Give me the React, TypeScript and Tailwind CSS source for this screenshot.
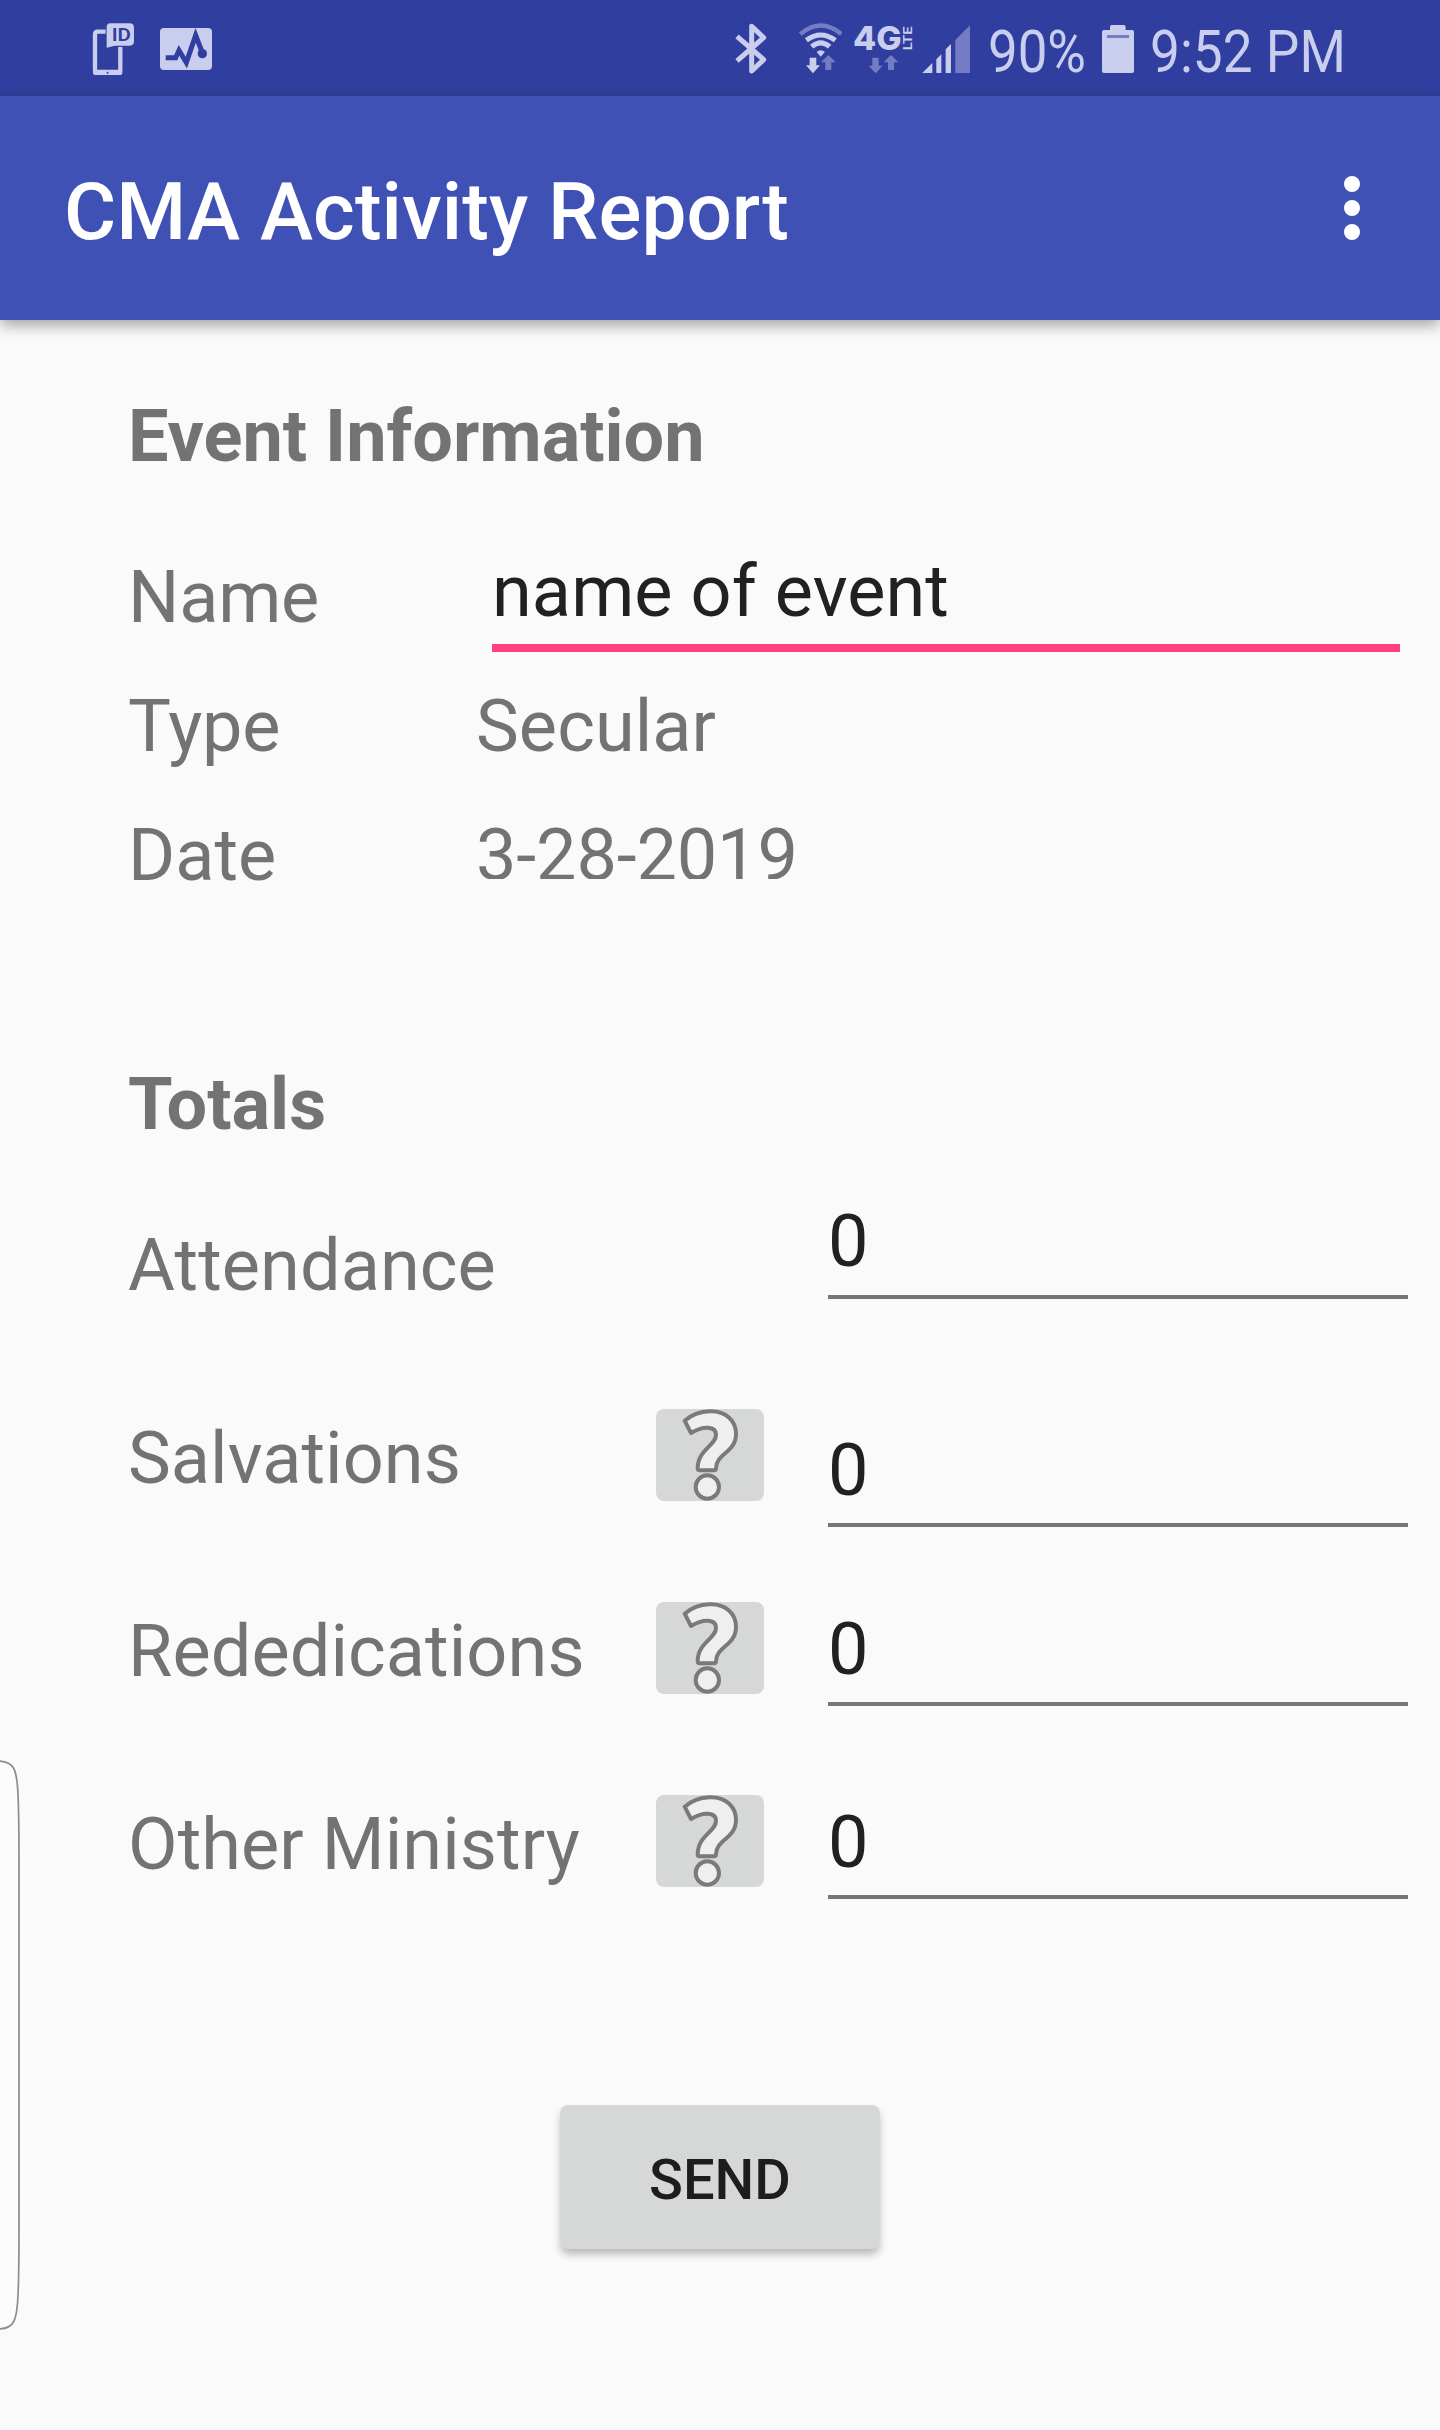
import React from "react";

const TINT = "#c9cdee";
const FADED = "#747dc4";

function PhoneIdIcon() {
  return (
    <svg viewBox="40 38 124 158" className="h-[52.7px] w-[41.3px] overflow-visible" fill="none">
      <path d="M78 64H54Q46 64 46 72V180Q46 187 54 187H114Q122 187 122 180V110" stroke={TINT} strokeWidth="13" />
      <rect x="40" y="178" width="88" height="16" rx="6" fill={TINT} />
      <circle cx="84" cy="187" r="3" fill="#303f9f" />
      <path d="M92 39H150Q163 39 163 52V93Q163 106 150 106H106L81 112V50Q81 39 92 39Z" fill={TINT} />
      <text x="96" y="93" fontSize="57" fontWeight="600" textLength="58" lengthAdjust="spacingAndGlyphs" fill="#303f9f">
        ID
      </text>
    </svg>
  );
}

function PulseIcon() {
  return (
    <svg viewBox="240 54 156 126" className="h-[42px] w-[52px]" fill="none">
      <rect x="240" y="54" width="156" height="126" rx="12" fill={TINT} />
      <path d="M257 143H287L297 121L319 158L347 76L367 128" stroke="#303f9f" strokeWidth="15" />
      <circle cx="367" cy="131" r="14" fill="#303f9f" />
    </svg>
  );
}

function BluetoothIcon() {
  return (
    <svg viewBox="44 40 96 154" className="h-[51.3px] w-8" fill="none" stroke={TINT} strokeWidth="15" strokeLinejoin="round">
      <path d="M50 80L130 150L94 184V50L130 84L50 154" />
    </svg>
  );
}

function WifiIcon() {
  return (
    <svg viewBox="236 40 130 152" className="h-[50.7px] w-[43.3px]" fill="none">
      <path d="M240 73Q302 22 363 73" stroke={FADED} strokeWidth="13" />
      <path d="M258 92Q301 60 345 92" stroke={TINT} strokeWidth="15" />
      <path d="M274 111Q301 88 328 111" stroke={TINT} strokeWidth="15" />
      <path d="M289 127Q301 116 314 127L301 141Z" fill={TINT} />
      <path d="M268 144H288V167H299L278 191L257 167H268Z" fill={TINT} />
      <path d="M315 181H333V158H347L324 136L302 158H315Z" fill={FADED} />
    </svg>
  );
}

function LteIcon() {
  return (
    <svg viewBox="400 46 180 146" className="h-[48.7px] w-[60px] overflow-visible" fill={TINT}>
      <text x="400" y="121" fontFamily="Inter, sans-serif" fontSize="98" fontWeight="800" textLength="146" lengthAdjust="spacingAndGlyphs">
        4G
      </text>
      <text transform="translate(578 122) rotate(-90)" fontSize="40" fontWeight="600" textLength="72" lengthAdjust="spacingAndGlyphs">
        LTE
      </text>
      <path d="M458 144H477V168H489L468 191L447 168H458Z" fill={FADED} />
      <path d="M505 181H523V158H536L514 136L492 158H505Z" fill={FADED} />
    </svg>
  );
}

function SignalIcon() {
  return (
    <svg viewBox="605 44 145 145" className="h-[48.3px] w-[48.3px]">
      <path d="M605 189L636 158V189Z M648 147L663 132V189H648Z M676 117L692 101V189H676Z" fill={TINT} />
      <path d="M705 89L749 45V189H705Z" fill={FADED} />
    </svg>
  );
}

function BatteryIcon() {
  return (
    <svg viewBox="396 45 96 144" className="h-12 w-8">
      <path d="M425 45H461Q467 45 467 51V60H486Q492 60 492 66V183Q492 189 486 189H402Q396 189 396 183V66Q396 60 402 60H420V51Q420 45 425 45Z" fill={TINT} />
      <path d="M411 75H477V84H411Z" fill={FADED} />
    </svg>
  );
}

function StatusBar() {
  return (
    <div className="flex h-24 items-start bg-[#303f9f] text-[60px] leading-[70px] text-[#c9cdee]">
      <div className="ml-[93.3px] mt-[22.7px]"><PhoneIdIcon /></div>
      <div className="ml-[25.4px] mt-7"><PulseIcon /></div>
      <div className="ml-[522.7px] mt-[23.3px]"><BluetoothIcon /></div>
      <div className="ml-8 mt-[23.3px]"><WifiIcon /></div>
      <div className="ml-[11.3px] mt-[25.3px]"><LteIcon /></div>
      <div className="ml-[8.3px] mt-[24.7px]"><SignalIcon /></div>
      <div className="ml-[18px] mt-[17px] w-[114px] shrink-0 origin-left scale-x-[0.88] whitespace-nowrap">90%</div>
      <div className="mt-[25px]"><BatteryIcon /></div>
      <div className="ml-4 mt-[17px] origin-left scale-x-[0.887] whitespace-nowrap">9:52 PM</div>
    </div>
  );
}

function AppBar() {
  return (
    <header className="relative flex h-56 items-center justify-between bg-[#3f51b5] pl-16 pr-20 shadow-[0_5px_14px_rgba(0,0,0,0.36)]">
      <h1 className="pt-[7px] text-[80px] font-medium leading-[94px] tracking-[0.05px] text-white">CMA Activity Report</h1>
      <button aria-label="More options" className="flex flex-col gap-2">
        <span className="size-4 rounded-full bg-white" />
        <span className="size-4 rounded-full bg-white" />
        <span className="size-4 rounded-full bg-white" />
      </button>
    </header>
  );
}

function HelpButton() {
  return (
    <button aria-label="Help" className="h-[92px] w-[108px] overflow-hidden rounded-lg bg-[#d6d8d7]">
      <svg viewBox="48 57 324 276" className="h-[92px] w-[108px]" fill="#efefef" stroke="#7a7a7a" strokeWidth="12" strokeLinejoin="round">
        <path d="M134 92Q165 66 208 64C258 62 288 92 288 132C288 188 228 190 228 235Q228 241 222 241H179Q173 241 173 235C173 178 228 168 228 134C228 108 190 106 153 129Z" />
        <circle cx="202" cy="291" r="35" />
      </svg>
    </button>
  );
}

function TotalRow({ label, fieldClass, help }: { label: string; fieldClass: string; help?: boolean }) {
  return (
    <div className="flex h-[193px] items-start">
      <div className="w-[528px] tracking-[0.1px]">{label}</div>
      <div className="-mt-2 w-[108px]">{help && <HelpButton />}</div>
      <div className={`ml-16 w-[580px] border-b-4 border-[#757575] text-[#212121] ${fieldClass}`}>0</div>
    </div>
  );
}

export default function App() {
  return (
    <div className="relative h-[2430px] w-[1440px] overflow-hidden bg-[#fafafa] font-[Roboto,sans-serif]">
      <StatusBar />
      <AppBar />
      <main className="pl-32 text-[72px] leading-[84px] text-[#737373]">
        <h2 className="pt-[75px] font-bold">Event Information</h2>
        <section className="mt-[71px]">
          <div className="flex items-start">
            <div className="mt-1.5 w-[364px] tracking-[-0.2px]">Name</div>
            <div className="h-[102px] w-[908px] border-b-8 border-[#ff4081] tracking-[0.1px] text-[#212121]">name of event</div>
          </div>
          <div className="mt-[33px] flex">
            <div className="w-[348px] tracking-[-0.2px]">Type</div>
            <div className="tracking-[0.1px]">Secular</div>
          </div>
          <div className="mt-[45px] flex">
            <div className="w-[348px]">Date</div>
            <div className="h-[65px] overflow-hidden tracking-[-0.15px]">3-28-2019</div>
          </div>
        </section>
        <h2 className="mt-[165px] font-bold">Totals</h2>
        <section className="mt-[77px]">
          <TotalRow label="Attendance" fieldClass="-mt-6 h-[99px]" />
          <TotalRow label="Salvations" help fieldClass="mt-3 h-[98px]" />
          <TotalRow label="Rededications" help fieldClass="-mt-0.5 h-[98px]" />
          <TotalRow label="Other Ministry" help fieldClass="-mt-0.5 h-[98px]" />
        </section>
      </main>
      <button className="mx-auto mt-[109px] block h-36 w-80 rounded-lg bg-[#d6d8d7] pt-[5px] text-[56px] font-medium leading-[66px] text-[#1d1d1d] shadow-[0_6px_8px_-1px_rgba(0,0,0,0.28)]">
        SEND
      </button>
      <svg viewBox="0 0 24 580" className="absolute left-0 top-[1755px] h-[580px] w-6" fill="#fcfcfc" stroke="#8c8c8c" strokeWidth="1.7">
        <path d="M-2 6C14 6 17 14 18 40Q19 60 19 110V470Q19 520 18 540C17 566 14 574 -2 574" />
      </svg>
    </div>
  );
}
